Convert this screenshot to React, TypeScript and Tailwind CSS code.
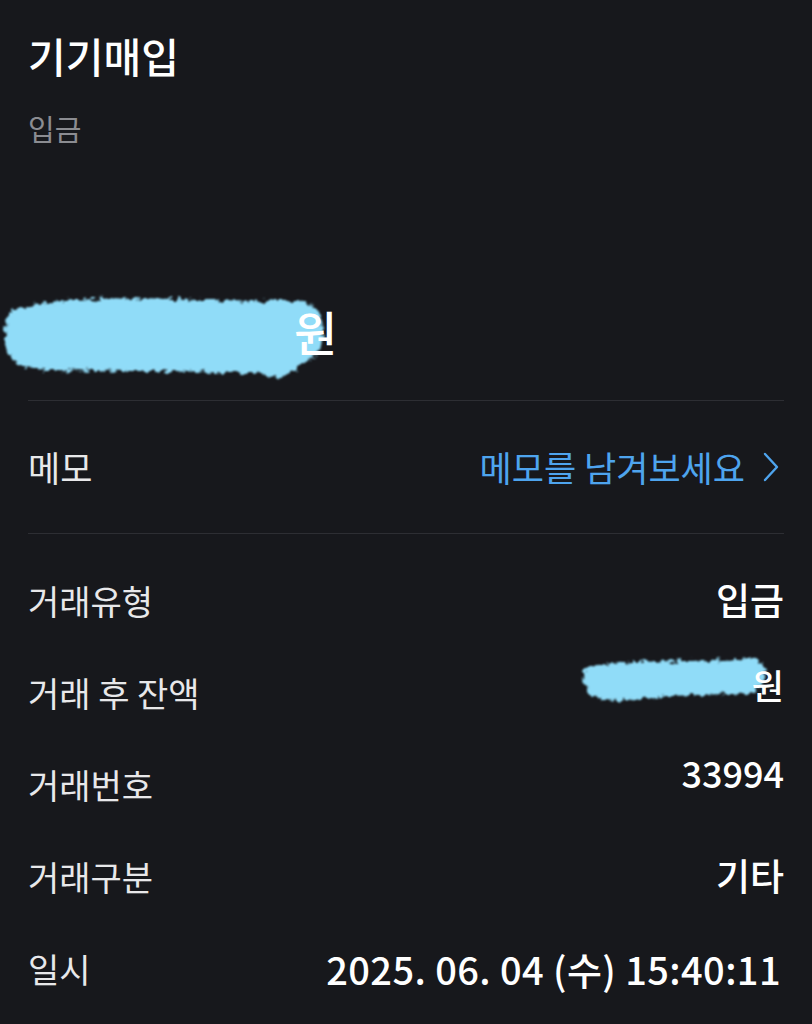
import React from "react";

const font = { fontFamily: '"Noto Sans CJK KR", "Noto Sans", sans-serif' };

// 가려진 금액 부분 (마커로 칠한 자국)
const Smudge: React.FC<{ className: string; w: number; h: number; d: string; id: string }> = ({
  className,
  w,
  h,
  d,
  id,
}) => (
  <svg className={className} width={w} height={h} viewBox={`0 0 ${w} ${h}`}>
    <defs>
      <filter id={id} x="-10%" y="-20%" width="120%" height="140%">
        <feTurbulence type="fractalNoise" baseFrequency="0.18" numOctaves="3" seed="4" />
        <feDisplacementMap in="SourceGraphic" scale="10" xChannelSelector="R" yChannelSelector="G" result="d" />
        <feGaussianBlur in="d" stdDeviation="0.8" />
      </filter>
    </defs>
    <path d={d} fill="#90dcf8" filter={`url(#${id})`} />
  </svg>
);

const InfoRow: React.FC<{ label: string; children: React.ReactNode }> = ({ label, children }) => (
  <div className="flex h-[92px] items-center justify-between">
    <span className="text-[34px] text-[#e8e8ea]">{label}</span>
    {children}
  </div>
);

export default function App() {
  return (
    <div className="min-h-screen w-full overflow-hidden bg-[#17181c] px-[28px] pt-[29px] text-white" style={font}>
      <h1 className="text-[41px] font-medium leading-[52px]">기기매입</h1>
      <p className="mt-[28px] text-[29px] leading-[38px] text-[#8b8c91]">입금</p>

      {/* 금액 */}
      <div className="relative mt-[143px] flex h-[80px] items-center">
        <Smudge
          id="big"
          className="absolute -left-[28px] -top-[2px]"
          w={345}
          h={98}
          d="M10 24 C40 10 120 8 200 12 L298 13 C314 14 322 22 323 40 C324 58 316 72 300 76 C294 88 276 93 262 86 C200 82 120 84 50 82 C20 82 4 72 5 47 C5 36 6 28 10 24 Z"
        />
        <span className="w-[266px]" />
        <span className="relative text-[47px] font-medium leading-none">원</span>
      </div>

      <div className="mt-[30px] h-px bg-[#2d2e33]" />

      {/* 메모 */}
      <div className="flex h-[132px] items-center justify-between">
        <span className="text-[35px] text-[#e8e8ea]">메모</span>
        <button className="mr-[5px] flex items-center gap-[18px] text-[35px] text-[#4ea4ee]">
          <span>메모를 남겨보세요</span>
          <svg width="16" height="30" viewBox="0 0 16 30" fill="none">
            <polyline points="2,2 14,15 2,28" stroke="#4ea4ee" strokeWidth="2.4" strokeLinecap="round" strokeLinejoin="round" />
          </svg>
        </button>
      </div>

      <div className="h-px bg-[#2d2e33]" />

      <div className="pt-[20px]">
        <InfoRow label="거래유형">
          <span className="text-[37px] font-medium">입금</span>
        </InfoRow>
        <InfoRow label="거래 후 잔액">
          <span className="relative mb-[14px] flex items-center">
            <Smudge
              id="small"
              className="absolute -left-[6px] -top-[8px]"
              w={210}
              h={60}
              d="M8 16 C40 8 110 12 160 8 C175 6 184 8 186 18 C188 30 182 40 170 42 C130 44 90 44 60 48 C40 52 18 50 10 40 C4 32 4 22 8 16 Z"
            />
            <span className="w-[168px]" />
            <span className="relative text-[35px] font-medium">원</span>
          </span>
        </InfoRow>
        <InfoRow label="거래번호">
          <span className="mb-[24px] text-[36px] font-medium">33994</span>
        </InfoRow>
        <InfoRow label="거래구분">
          <span className="text-[37px] font-medium">기타</span>
        </InfoRow>
        <InfoRow label="일시">
          <span className="mr-[3px] text-[38px] font-medium tracking-[0.4px]">2025. 06. 04 (수) 15:40:11</span>
        </InfoRow>
      </div>
    </div>
  );
}
